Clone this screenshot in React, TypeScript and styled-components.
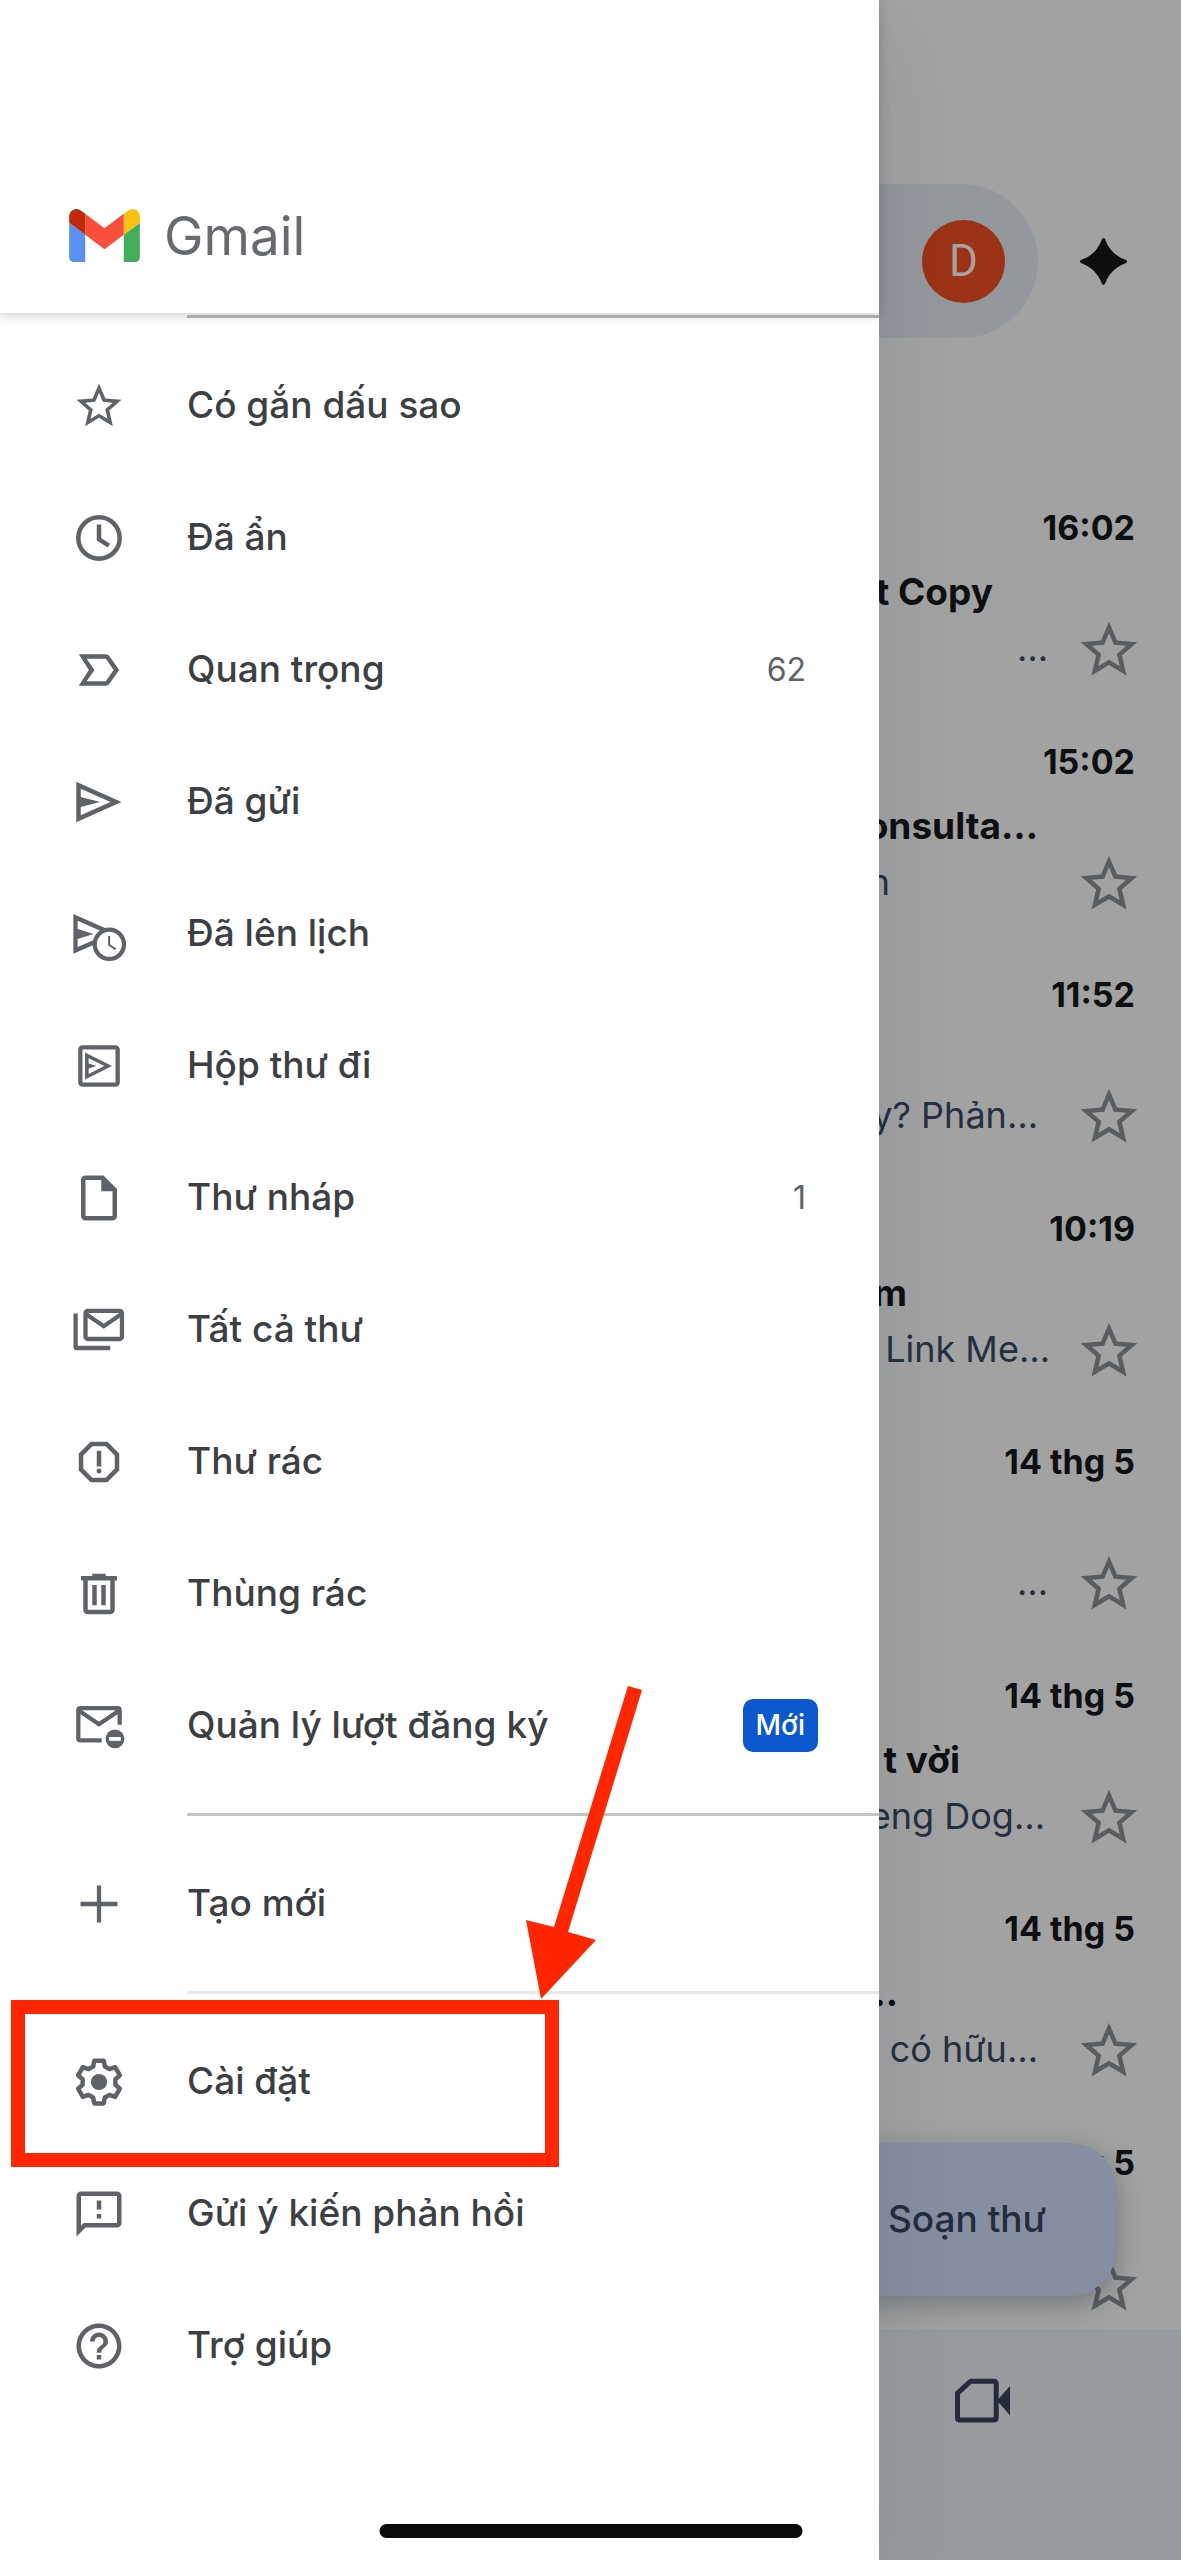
import React from "react";
import styled, { createGlobalStyle } from "styled-components";

const GlobalStyle = createGlobalStyle`
  * {
    box-sizing: border-box;
  }

  body {
    margin: 0;
    background: #a2a2a2;
    font-family: Inter, "Noto Sans", sans-serif;
  }

  button {
    padding: 0;
    border: 0;
    background: none;
    font: inherit;
    color: inherit;
  }

  svg {
    display: block;
    flex: none;
  }
`;

/* ---------- Page ---------- */

const Page = styled.div`
  position: relative;
  display: flex;
  min-height: 100vh;
  overflow: hidden;
`;

const HomeIndicator = styled.div`
  position: absolute;
  bottom: 22px;
  left: 50%;
  z-index: 3;
  width: 423px;
  height: 14px;
  border-radius: 7px;
  background: #0a0a0a;
  transform: translateX(-50%);
`;

/* ---------- Drawer ---------- */

const Drawer = styled.aside`
  position: relative;
  z-index: 2;
  flex: 1;
  min-width: 0;
  background: #fff;
  box-shadow: 0 40px 80px rgba(20, 40, 60, 0.1);
`;

const DrawerHeader = styled.header`
  display: flex;
  align-items: center;
  gap: 24px;
  height: 313px;
  padding: 158px 69px 0;
  box-shadow: 0 2px 10px rgba(60, 64, 67, 0.28);
`;

const Brand = styled.span`
  font-size: 53px;
  line-height: 64px;
  color: #676b6f;
`;

const Menu = styled.nav`
  margin-top: -19px;
`;

const Group = styled.ul`
  margin: 0;
  padding: 0;
  list-style: none;
`;

const Divider = styled.hr<{ $tone: string }>`
  height: 3px;
  margin: 21px 0 22px 187px;
  border: 0;
  background: ${(p) => p.$tone};
`;

const Item = styled.li`
  position: relative;
`;

const ItemLink = styled.a`
  display: flex;
  align-items: center;
  gap: 61px;
  height: 132px;
  padding: 0 61px 0 72px;
  color: #5f6368;
  text-decoration: none;
`;

const ItemLabel = styled.span`
  flex: 1;
  padding-bottom: 2px;
  font-size: 37px;
  font-weight: 500;
  line-height: 48px;
  color: #3c4043;
`;

const Count = styled.span`
  padding-right: 12px;
  font-size: 32px;
  line-height: 40px;
`;

const Badge = styled.span`
  margin-bottom: 2px;
  padding: 6px 13px 7px;
  border-radius: 10px;
  background: #0b57d0;
  font-size: 28px;
  font-weight: 500;
  line-height: 40px;
  color: #fff;
`;

const Highlight = styled.div`
  position: absolute;
  top: -16px;
  left: 11px;
  width: 548px;
  height: 167px;
  border: 14px solid #ff2600;
  pointer-events: none;
`;

const Pointer = styled.svg`
  position: absolute;
  top: -336px;
  left: 520px;
  pointer-events: none;
`;

/* ---------- Inbox behind the drawer ---------- */

const Inbox = styled.main`
  display: flex;
  flex: none;
  flex-direction: column;
  width: 302px;
  overflow: hidden;
  background: #a2a2a2;
`;

const InboxHeader = styled.header`
  display: flex;
  align-items: center;
  gap: 42px;
  height: 461px;
  padding: 184px 54px 123px 0;
`;

const SearchPill = styled.div`
  display: flex;
  flex: 1;
  align-items: center;
  justify-content: flex-end;
  height: 154px;
  padding-right: 33px;
  border-radius: 0 77px 77px 0;
  background: #94979c;
`;

const Avatar = styled.button`
  width: 83px;
  height: 83px;
  border-radius: 50%;
  background: #9c3216;
  font-family: Roboto, sans-serif;
  font-size: 44px;
  color: #a6a3a2;
`;

const MailArea = styled.div`
  position: relative;
  display: flex;
  flex: 1;
  overflow: hidden;
`;

const MailList = styled.ul`
  display: grid;
  flex: 1;
  grid-auto-rows: minmax(0, 1fr);
  min-width: 0;
  margin: 0;
  padding: 0;
  list-style: none;
`;

const Mail = styled.li`
  display: flex;
  flex-direction: column;
  min-width: 0;
  padding: 47px 38px 0 0;
`;

const Time = styled.time`
  padding-right: 8px;
  margin-bottom: 20px;
  font-size: 34px;
  font-weight: 700;
  line-height: 40px;
  text-align: right;
  color: #0e0f10;
`;

const Line = styled.div<{ $end: number }>`
  display: flex;
  flex: 1;
  justify-content: flex-end;
  min-width: 0;
  padding-right: ${(p) => p.$end}px;
  white-space: pre;
`;

const Subject = styled(Line)`
  flex: none;
  height: 48px;
  font-size: 37px;
  font-weight: 700;
  line-height: 48px;
  color: #0e0f10;
`;

const Snippet = styled(Line)`
  padding-bottom: 4px;
  font-size: 36px;
  line-height: 48px;
  color: #262f3e;
`;

const MailFoot = styled.div`
  display: flex;
  align-items: center;
`;

const StarButton = styled.button`
  flex: none;
  color: #595d60;
`;

const Compose = styled.button`
  position: absolute;
  right: 65px;
  bottom: 33px;
  left: -80px;
  height: 153px;
  padding: 0 70px 2px 0;
  border-radius: 46px;
  background: #858fa1;
  box-shadow: 0 8px 28px rgba(30, 40, 50, 0.35);
  font-size: 37px;
  font-weight: 500;
  text-align: right;
  color: #242c3b;
`;

const BottomBar = styled.nav`
  display: flex;
  align-items: flex-start;
  height: 231px;
  padding: 49px 0 0 75px;
  background: #979b9e;
  color: #242c3b;
`;

/* ---------- Icons ---------- */

const STAR =
  "M22 9.24l-7.19-.62L12 2 9.19 8.63 2 9.24l5.46 4.73L5.82 21 12 17.27 18.18 21l-1.63-7.03L22 9.24zM12 15.4l-3.76 2.27 1-4.28-3.32-2.88 4.38-.38L12 6.1l1.71 4.04 4.38.38-3.32 2.88 1 4.28L12 15.4z";

const icons = {
  star: <path d={STAR} />,
  clock: (
    <g fill="none" stroke="currentColor" strokeWidth="2">
      <circle cx="12" cy="12" r="9.2" />
      <path d="M12 6V12.6L16.4 15.4" />
    </g>
  ),
  important: (
    <path d="M15 19H3l4.5-7L3 5h12c.65 0 1.26.31 1.63.84L21 12l-4.37 6.16c-.37.52-.98.84-1.63.84zm-8.5-2H15l3.5-5L15 7H6.5l3.5 5-3.5 5z" />
  ),
  send: <path fillRule="evenodd" d="M1.9 3L22 12 1.9 21zM3.9 6.1V9.8L12.5 12 3.9 14.2V17.9L17.1 12z" />,
  schedule: (
    <>
      <path fillRule="evenodd" d="M.6 3.1L20.7 12 .6 20.8zM2.5 6.1V9.8L9.6 12 2.5 14.2V17.8L15.8 12z" />
      <circle cx="16.6" cy="16.6" r="6.5" fill="#fff" stroke="currentColor" strokeWidth="1.9" />
      <path d="M16.5 12.9V16.9L19.4 18.7" fill="none" stroke="currentColor" strokeWidth="0.9" />
    </>
  ),
  outbox: (
    <>
      <rect x="3.7" y="3.7" width="16.6" height="16.6" rx="1" fill="none" stroke="currentColor" strokeWidth="1.9" />
      <path fillRule="evenodd" d="M5.8 6L17.8 12 5.8 18zM7.4 8.5V10.9L10.9 12 7.4 13.1V15.5L14.4 12z" />
    </>
  ),
  draft: (
    <path d="M14 2H6c-1.1 0-1.99.9-1.99 2L4 20c0 1.1.89 2 1.99 2H18c1.1 0 2-.9 2-2V8l-6-6zM6 20V4h7v5h5v11H6z" />
  ),
  allMail: (
    <g fill="none" stroke="currentColor" strokeWidth="1.9">
      <rect x="6" y="3.5" width="16.2" height="12.5" rx="1" />
      <path d="M6 4.8L14.1 10.3 22.2 4.8" />
      <path d="M1.6 4.7V19.5Q1.6 20 2.1 20H17" />
    </g>
  ),
  spam: (
    <>
      <path d="M15.73 3H8.27L3 8.27v7.46L8.27 21h7.46L21 15.73V8.27L15.73 3zM19 14.9L14.9 19H9.1L5 14.9V9.1L9.1 5h5.8L19 9.1v5.8z" />
      <path d="M11 7h2v7h-2z" />
      <circle cx="12" cy="16" r="1.1" />
    </>
  ),
  trash: (
    <path d="M7 21q-.825 0-1.412-.587Q5 19.825 5 19V6H4V4h5V3h6v1h5v2h-1v13q0 .825-.587 1.413Q17.825 21 17 21ZM17 6H7v13h10ZM9 17h2V8H9Zm4 0h2V8h-2Z" />
  ),
  subscriptions: (
    <>
      <path
        d="M13.2 18.4H3.8Q2.8 18.4 2.8 17.4V5.1Q2.8 4.1 3.8 4.1H20.2Q21.2 4.1 21.2 5.1V11.4M2.8 5L12 11.2 21.2 5"
        fill="none"
        stroke="currentColor"
        strokeWidth="1.9"
      />
      <circle cx="19.1" cy="17.7" r="4.2" />
      <path d="M16.5 16.9h5.2v1.7h-5.2z" fill="#fff" />
    </>
  ),
  plus: <path d="M12 3.8V20.2M3.8 12H20.2" fill="none" stroke="currentColor" strokeWidth="1.9" />,
  settings: (
    <g transform="translate(12 12)">
      <path
        d="M-2.6-6.9L-2.1-9.5H2.1L2.6-6.9 4.68-5.7 7.18-6.57 9.28-2.93 7.28-1.2V1.2L9.28 2.93 7.18 6.57 4.68 5.7 2.6 6.9 2.1 9.5H-2.1L-2.6 6.9-4.68 5.7-7.18 6.57-9.28 2.93-7.28 1.2V-1.2L-9.28-2.93-7.18-6.57-4.68-5.7z"
        fill="none"
        stroke="currentColor"
        strokeWidth="2"
        strokeLinejoin="round"
      />
      <circle r="3.6" />
    </g>
  ),
  feedback: (
    <path d="M20 2H4c-1.1 0-1.99.9-1.99 2L2 22l4-4h14c1.1 0 2-.9 2-2V4c0-1.1-.9-2-2-2zm0 14H5.17l-.59.59-.58.58V4h16v12zm-9-4h2v2h-2zm0-6h2v4h-2z" />
  ),
  help: (
    <path d="M11 18h2v-2h-2v2zm1-16C6.48 2 2 6.48 2 12s4.48 10 10 10 10-4.48 10-10S17.52 2 12 2zm0 18c-4.41 0-8-3.59-8-8s3.59-8 8-8 8 3.59 8 8-3.59 8-8 8zm0-14c-2.21 0-4 1.79-4 4h2c0-1.1.9-2 2-2s2 .9 2 2c0 2-3 1.75-3 5h2c0-2.25 3-2.5 3-5 0-2.21-1.79-4-4-4z" />
  ),
};

type IconName = keyof typeof icons;

const Glyph = styled.svg`
  overflow: visible;
  fill: currentColor;
`;

function Icon({ name, size = 54 }: { name: IconName; size?: number }) {
  return (
    <Glyph width={size} height={size} viewBox="0 0 24 24" aria-hidden="true">
      {icons[name]}
    </Glyph>
  );
}

function GmailLogo() {
  return (
    <svg width="71" height="53" viewBox="52 42 88 66" aria-hidden="true">
      <path fill="#5991f0" d="M58 108h14V74L52 59v43c0 3.32 2.69 6 6 6" />
      <path fill="#41ad5d" d="M120 108h14c3.32 0 6-2.69 6-6V59l-20 15" />
      <path fill="#fcc013" d="M120 48v26l20-15v-8c0-7.42-8.47-11.65-14.4-7.2" />
      <path fill="#fa4d3a" d="M72 74V48l24 18 24-18v26L96 92" />
      <path fill="#c1290c" d="M52 51v8l20 15V48l-5.6-4.2c-5.94-4.45-14.4-.22-14.4 7.2" />
    </svg>
  );
}

function Sparkle() {
  return (
    <svg width="47" height="47" viewBox="0 0 24 24" fill="#0e0e0e" aria-hidden="true">
      <path d="M12 0C12.5 0 12.8.4 13 1.1 14.7 5.700 18.300 9.300 22.9 11 23.6 11.2 24 11.5 24 12S23.6 12.8 22.9 13C18.300 14.700 14.700 18.300 13 22.9 12.8 23.6 12.5 24 12 24S11.2 23.6 11 22.9C9.300 18.300 5.700 14.700 1.1 13 .4 12.8 0 12.5 0 12S.4 11.2 1.1 11C5.700 9.300 9.300 5.700 11 1.1 11.2.4 11.5 0 12 0z" />
    </svg>
  );
}

function VideoIcon() {
  return (
    <svg width="56" height="46" viewBox="0 0 56 46" aria-hidden="true">
      <path
        d="M16.5 3.3H39.5Q42.2 3.3 42.2 6V39.4Q42.2 42.1 39.5 42.1H6.2Q3.5 42.1 3.5 39.4V15.2z"
        fill="none"
        stroke="currentColor"
        strokeWidth="5"
        strokeLinejoin="round"
      />
      <path d="M43 22.5L56 8V37.5z" fill="currentColor" />
    </svg>
  );
}

/* ---------- Data ---------- */

interface Entry {
  icon: IconName;
  label: string;
  count?: number;
  badge?: string;
  highlighted?: boolean;
}

const groups: { tone: string; entries: Entry[] }[] = [
  {
    tone: "#aaacae",
    entries: [
      { icon: "star", label: "Có gắn dấu sao" },
      { icon: "clock", label: "Đã ẩn" },
      { icon: "important", label: "Quan trọng", count: 62 },
      { icon: "send", label: "Đã gửi" },
      { icon: "schedule", label: "Đã lên lịch" },
      { icon: "outbox", label: "Hộp thư đi" },
      { icon: "draft", label: "Thư nháp", count: 1 },
      { icon: "allMail", label: "Tất cả thư" },
      { icon: "spam", label: "Thư rác" },
      { icon: "trash", label: "Thùng rác" },
      { icon: "subscriptions", label: "Quản lý lượt đăng ký", badge: "Mới" },
    ],
  },
  { tone: "#c2c5c5", entries: [{ icon: "plus", label: "Tạo mới" }] },
  {
    tone: "#e8e8e8",
    entries: [
      { icon: "settings", label: "Cài đặt", highlighted: true },
      { icon: "feedback", label: "Gửi ý kiến phản hồi" },
      { icon: "help", label: "Trợ giúp" },
    ],
  },
];

interface MailEntry {
  time: string;
  subject?: string;
  subjectEnd?: number;
  snippet?: string;
  snippetEnd?: number;
}

const mails: MailEntry[] = [
  { time: "16:02", subject: "t Copy", subjectEnd: 150, snippet: "…", snippetEnd: 27 },
  { time: "15:02", subject: "onsulta…", subjectEnd: 105, snippet: "n", snippetEnd: 185 },
  { time: "11:52", snippet: "y? Phản…", snippetEnd: 37 },
  { time: "10:19", subject: "m", subjectEnd: 236, snippet: "Link Me…", snippetEnd: 25 },
  { time: "14 thg 5", snippet: "…", snippetEnd: 27 },
  { time: "14 thg 5", subject: "t vời", subjectEnd: 183, snippet: "eng Dog…", snippetEnd: 30 },
  { time: "14 thg 5", subject: "…", subjectEnd: 245, snippet: "có hữu…", snippetEnd: 37 },
  { time: "14 thg 5" },
];

/* ---------- App ---------- */

export default function App() {
  return (
    <Page>
      <GlobalStyle />
      <Drawer>
        <DrawerHeader>
          <GmailLogo />
          <Brand>Gmail</Brand>
        </DrawerHeader>
        <Menu>
          {groups.map((group) => (
            <React.Fragment key={group.tone}>
              <Divider $tone={group.tone} />
              <Group>
                {group.entries.map((entry) => (
                  <Item key={entry.label}>
                    <ItemLink href="#">
                      <Icon name={entry.icon} />
                      <ItemLabel>{entry.label}</ItemLabel>
                      {entry.count !== undefined && <Count>{entry.count}</Count>}
                      {entry.badge && <Badge>{entry.badge}</Badge>}
                    </ItemLink>
                    {entry.highlighted && (
                      <>
                        <Highlight />
                        <Pointer width="130" height="320" viewBox="0 0 130 320" aria-hidden="true">
                          <path fill="#ff2600" d="M108 6L122 10 48 252 76 260 21 319 6 240 34 247z" />
                        </Pointer>
                      </>
                    )}
                  </Item>
                ))}
              </Group>
            </React.Fragment>
          ))}
        </Menu>
      </Drawer>

      <Inbox>
        <InboxHeader>
          <SearchPill>
            <Avatar>D</Avatar>
          </SearchPill>
          <button aria-label="Gemini">
            <Sparkle />
          </button>
        </InboxHeader>
        <MailArea>
          <MailList>
            {mails.map((mail, index) => (
              <Mail key={index}>
                <Time>{mail.time}</Time>
                <Subject $end={mail.subjectEnd ?? 0}>{mail.subject}</Subject>
                <MailFoot>
                  <Snippet $end={mail.snippetEnd ?? 0}>{mail.snippet}</Snippet>
                  <StarButton aria-label="Gắn dấu sao">
                    <Icon name="star" size={68} />
                  </StarButton>
                </MailFoot>
              </Mail>
            ))}
          </MailList>
          <Compose>Soạn thư</Compose>
        </MailArea>
        <BottomBar>
          <button aria-label="Meet">
            <VideoIcon />
          </button>
        </BottomBar>
      </Inbox>
      <HomeIndicator />
    </Page>
  );
}
